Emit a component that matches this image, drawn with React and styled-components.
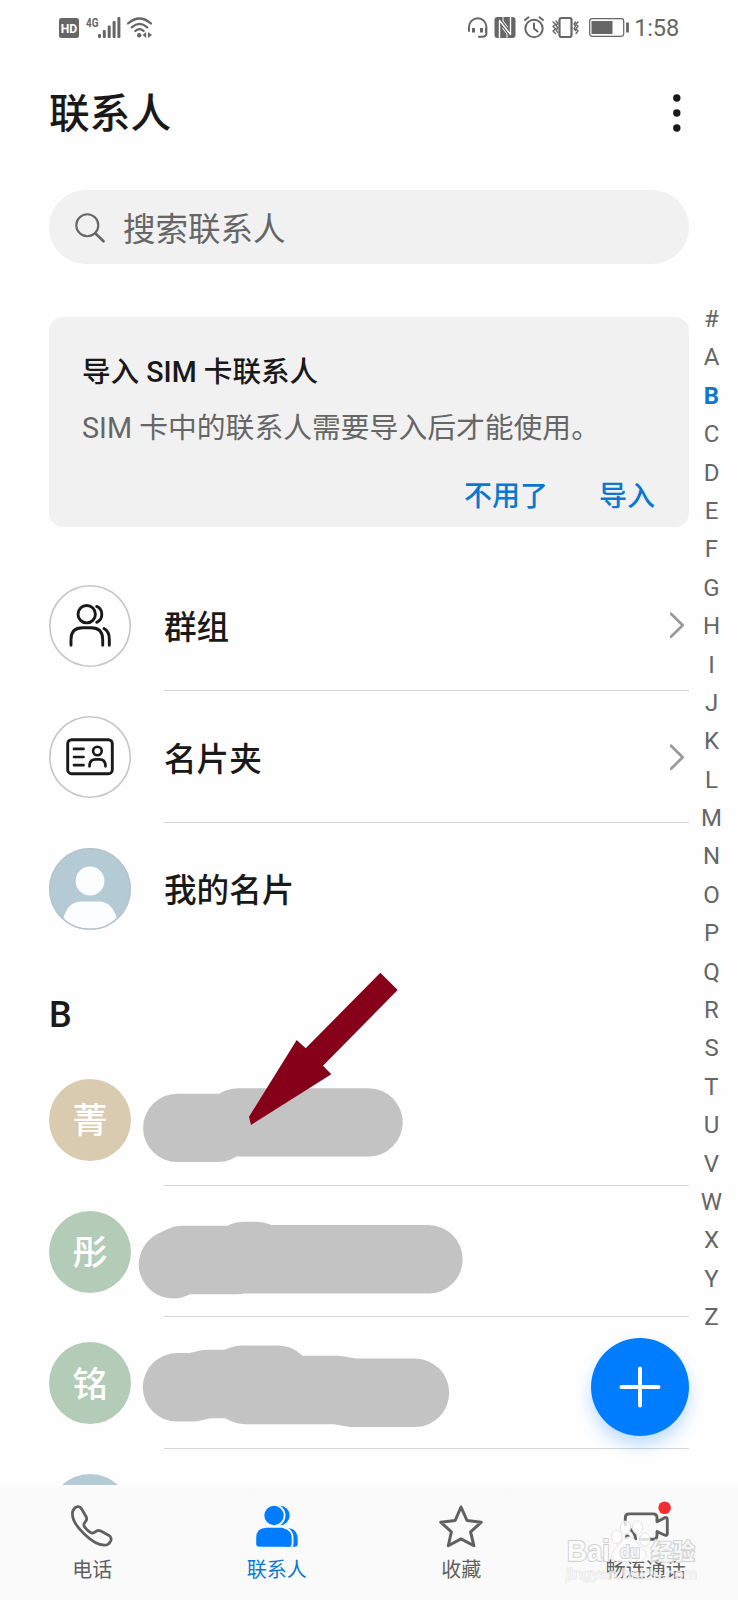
import React from "react";
import styled, { createGlobalStyle } from "styled-components";

const GlobalStyle = createGlobalStyle`
  * { box-sizing: border-box; }
  body { margin: 0; background: #fefefe; }
`;

const Screen = styled.div`
  position: relative;
  display: flex;
  flex-direction: column;
  width: 738px;
  height: 1600px;
  overflow: hidden;
  background: #fefefe;
  color: #191919;
  font-family: Roboto, "Noto Sans CJK SC", sans-serif;
`;

const StatusBar = styled.header`
  display: flex;
  align-items: center;
  justify-content: space-between;
  height: 56px;
  padding: 0 59px 0 58px;
  color: #666;
`;

const StatusGroup = styled.div`
  display: flex;
  align-items: center;
  gap: ${(p) => p.$gap}px;
`;

const Clock = styled.span`
  font-size: 23.6px;
  line-height: 28px;
  letter-spacing: -0.2px;
`;

const TitleBar = styled.div`
  display: flex;
  align-items: center;
  justify-content: space-between;
  height: 114px;
  padding: 0 57px 0 49px;
`;

const Title = styled.h1`
  margin: 0;
  padding-top: 2px;
  font-size: 40.7px;
  font-weight: 500;
  line-height: 60px;
`;

const SearchBox = styled.div`
  display: flex;
  align-items: center;
  gap: 17px;
  height: 74px;
  margin: 20px 49px 0;
  padding: 2px 0 0 26px;
  border-radius: 37px;
  background: #f1f1f1;
  color: #666;
  font-size: 32.5px;
  line-height: 44px;
  span { margin-top: 3px; }
`;

const Content = styled.div`
  display: flex;
  height: 1221px;
  overflow: hidden;
`;

const Main = styled.main`
  width: 640px;
  margin-left: 49px;
`;

const SimCard = styled.section`
  display: flex;
  flex-direction: column;
  height: 210px;
  margin: 53px 0 32.8px;
  padding: 33px 34px 0 33px;
  border-radius: 14px;
  background: #f1f1f1;
`;

const CardTitle = styled.div`
  font-size: 28.6px;
  font-weight: 500;
  line-height: 44px;
`;

const CardText = styled.div`
  margin-top: 12px;
  color: #666;
  font-size: 28.8px;
  line-height: 44px;
  white-space: nowrap;
`;

const CardActions = styled.div`
  display: flex;
  justify-content: flex-end;
  gap: 51px;
  margin-top: 25px;
`;

const TextButton = styled.button`
  padding: 0;
  border: 0;
  background: none;
  color: #0a78cf;
  font: 500 28px/44px Roboto, "Noto Sans CJK SC", sans-serif;
`;

const Row = styled.div`
  display: flex;
  align-items: center;
  flex-shrink: 0;
  height: ${(p) => p.$height}px;
`;

const RowBody = styled.div`
  display: flex;
  flex: 1;
  align-items: center;
  justify-content: space-between;
  align-self: stretch;
  margin-left: 33px;
  padding-right: 4px;
  border-bottom: 1px solid ${(p) => (p.$last ? "transparent" : "#d6d6d6")};
  font-size: 32.6px;
  font-weight: 500;
  span { margin-top: -1px; }
`;

const IconCircle = styled.div`
  width: 82px;
  height: 82px;
  svg { display: block; }
`;

const Avatar = styled.div`
  display: flex;
  align-items: center;
  justify-content: center;
  width: 82px;
  height: 82px;
  padding-bottom: 4px;
  border-radius: 50%;
  background: ${(p) => p.$color};
  color: #fff;
  font-size: 35px;
  font-weight: 500;
`;

const Redaction = styled.svg`
  flex-shrink: 0;
  margin: 1px 0 0 -33px;
  overflow: visible;
`;

const SectionLetter = styled.h2`
  display: flex;
  align-items: center;
  height: 99.6px;
  margin: 0;
  padding-top: 21px;
  font-size: 36px;
  font-weight: 500;
`;

const IndexBar = styled.nav`
  display: flex;
  flex-direction: column;
  width: 45px;
  padding-top: 36px;
`;

const IndexLetter = styled.span`
  height: 38.4px;
  color: ${(p) => (p.$active ? "#0a78cf" : "#666")};
  font-size: 24px;
  font-weight: ${(p) => (p.$active ? 700 : 400)};
  line-height: 38.4px;
  text-align: center;
`;

const TabBar = styled.nav`
  display: flex;
  height: 115px;
  padding-top: 17px;
  background: linear-gradient(#fdfdfd, #f9f9f9 4px, #fafafa);
`;

const Tab = styled.div`
  display: flex;
  flex: 1;
  flex-direction: column;
  align-items: center;
  color: ${(p) => (p.$active ? "#0a78cf" : "#5f5f5f")};
  font-size: 20px;
  line-height: 30px;
  svg { margin-bottom: 5px; overflow: visible; }
`;

const AddButton = styled.button`
  position: absolute;
  right: 49px;
  bottom: 164px;
  display: flex;
  align-items: center;
  justify-content: center;
  width: 98px;
  height: 98px;
  padding: 0;
  border: 0;
  border-radius: 50%;
  background: #007dfe;
  box-shadow: 0 9px 16px rgba(0, 125, 254, 0.25);
`;

const Pointer = styled.svg`
  position: absolute;
  left: 249px;
  top: 972px;
`;

const Watermark = styled.svg`
  position: absolute;
  right: 36px;
  bottom: 12px;
`;

const line = { fill: "none", strokeLinecap: "round", strokeLinejoin: "round" };

const LeftStatus = () => (
  <svg width="96" height="24" viewBox="58 16 96 24" fill="#666">
    <rect x="59" y="18" width="20" height="20" rx="2.5" />
    <text x="69" y="32.6" fill="#fff" fontSize="12.5" fontWeight="700" textAnchor="middle" textLength="16.5" lengthAdjust="spacingAndGlyphs">HD</text>
    <text x="86" y="26.5" fontSize="13.3" fontWeight="700" textLength="12.5" lengthAdjust="spacingAndGlyphs">4G</text>
    <rect x="98" y="34" width="3" height="4" rx="1" />
    <rect x="102.8" y="30" width="3" height="8" rx="1" />
    <rect x="107.7" y="25.5" width="3" height="12.5" rx="1" />
    <rect x="112.6" y="21" width="3" height="17" rx="1" />
    <rect x="117.4" y="17" width="3" height="21" rx="1" />
    <g {...line} stroke="#666" strokeWidth="2.2">
      <path d="M128 23.5Q139.5 13.5 151 23.5M131.7 27.3Q139.5 20.5 147.3 27.3M135.3 31Q139.5 27.3 143.7 31" />
    </g>
    <circle cx="139.2" cy="35.2" r="2.2" />
    <path d="M146.2 32v6l-3.6-3zM148 32v6l4-3z" />
  </svg>
);

const RightStatus = () => (
  <svg width="164" height="24" viewBox="466 16 164 24" fill="none" stroke="#666" strokeWidth="2" strokeLinecap="round" strokeLinejoin="round">
    <path d="M469 31v-4a8.7 8.7 0 0 1 17.4 0v6q0 3.8-4 3.8h-3.5M486 32.5v-4" />
    <path d="M473.5 28v4.5M481.5 28v4.5" strokeWidth="3" strokeLinecap="butt" />
    <rect x="494.5" y="17" width="21" height="21" rx="3" fill="#666" stroke="none" />
    <path d="M499.5 37.5V20.5L510.5 34.5V17.5" stroke="#fff" strokeWidth="1.4" />
    <path d="M503 17.5v3.5l4.5 6M502.5 28l4.5 6v3.5" stroke="#fff" strokeWidth="1" />
    <circle cx="534" cy="28.5" r="8.7" />
    <path d="M534 23.5v5l3.5 3M525 20l3.5-2.7M543 20l-3.5-2.7" />
    <rect x="559.5" y="18" width="12" height="19" rx="2" strokeWidth="2.2" />
    <path d="M553 22l2.5 2-2.5 2.5 2.5 2.3-2.5 2.2 2.5 2.5M556 21l2 2.5-2 2 2 2.5-2 2 2 2.5M578 22l-2 2 2 2.5-2 2.3 2 2.2-2 2.5M575.5 22l-1.5 2 1.5 2-1.5 2.5 1.5 2" strokeWidth="1.4" />
    <rect x="589.7" y="18.7" width="34" height="17.6" rx="2.5" strokeWidth="1.2" />
    <rect x="591.5" y="21" width="21" height="13" fill="#666" stroke="none" />
    <path d="M627.5 22.5v10" strokeWidth="2.8" strokeLinecap="butt" />
  </svg>
);

const MoreIcon = () => (
  <svg width="8" height="40" viewBox="0 0 8 40" fill="#191919">
    <circle cx="3.8" cy="5" r="3.7" /><circle cx="3.8" cy="20" r="3.7" /><circle cx="3.8" cy="35" r="3.7" />
  </svg>
);

const SearchIcon = () => (
  <svg width="31" height="32" viewBox="0 0 31 32" {...line} stroke="#666" strokeWidth="2.1">
    <circle cx="12.3" cy="13.2" r="11" /><path d="M20.3 21.2l8.2 8" strokeWidth="2.7" />
  </svg>
);

const Chevron = () => (
  <svg width="15" height="26" viewBox="0 0 15 26" {...line} stroke="#999" strokeWidth="2.7">
    <path d="M1 1.8L12.7 13.3L1 24.8" />
  </svg>
);

const GroupIcon = () => (
  <svg width="82" height="82" {...line} stroke="#191919" strokeWidth="2.9">
    <circle cx="41" cy="41" r="40.2" stroke="#c6c6c6" strokeWidth="1.6" />
    <circle cx="37.7" cy="29.2" r="8.7" />
    <path d="M47.7 21.4C54.5 24 54.5 34.5 47.7 37.3M22 60.2V54.5Q22 42.8 33.7 42.8H42Q53.7 42.8 53.7 54.5V60.2M55 43.6Q60.3 46.5 60.3 54V60.2" />
  </svg>
);

const CardIcon = () => (
  <svg width="82" height="82" {...line} stroke="#191919" strokeWidth="2.9">
    <circle cx="41" cy="41" r="40.2" stroke="#c6c6c6" strokeWidth="1.6" />
    <rect x="18.7" y="23.7" width="44.6" height="34" rx="4" />
    <path d="M25 32.9h9.5M25 41h9.5M25 49.2h9.5M40.5 50.3Q40.5 43.3 46.5 43.3h4Q56.5 43.3 56.5 50.3" strokeWidth="2.7" />
    <circle cx="48.4" cy="35" r="4.3" strokeWidth="2.6" />
  </svg>
);

const ProfileIcon = () => (
  <svg width="82" height="82">
    <circle cx="41" cy="41" r="41" fill="#b4cad5" />
    <circle cx="41" cy="33" r="14.4" fill="#fbfdfe" />
    <path d="M14.3 70.5C17 60 23 53.5 32 53.5H50C59 53.5 65 60 67.7 70.5A39.6 39.6 0 0 1 14.3 70.5Z" fill="#fbfdfe" />
    <circle cx="41" cy="41" r="40.3" fill="none" stroke="#b7c4ca" strokeWidth="1.4" />
  </svg>
);

const PhoneIcon = () => (
  <svg width="48" height="48" {...line} stroke="#606060" strokeWidth="2.8">
    <path d="M5.2 8.2C7.7 3.8 11.6 3.5 13.7 7L18 14.5Q19.5 17 17.7 19.3L16.3 21.3Q15.3 23 16.5 24.7Q18.7 28.2 22.5 30.5Q24.5 31.6 26.5 30.3L28.5 29Q30.5 28 32.8 29L41 33.4Q44 35.3 42.8 38.7Q40.8 43.2 36.5 43.2C24.5 43.2 4.5 23 4.5 12.5Q4.2 10 5.2 8.2Z" />
  </svg>
);

const PeopleIcon = () => (
  <svg width="48" height="48" fill="#007dfe">
    <circle cx="26.8" cy="13.5" r="9.8" />
    <path d="M33 26Q44.7 26 44.7 37.5V42Q44.7 44.8 42 44.8H33Z" />
    <circle cx="21" cy="13.5" r="10.6" stroke="#fafafa" strokeWidth="1.8" />
    <path d="M3.2 36Q3.2 25.7 13.5 25.7H28.5Q38.8 25.7 38.8 36V41.5Q38.8 44.8 35.5 44.8H6.5Q3.2 44.8 3.2 41.5Z" />
    <path d="M31 25.5Q39.6 27.5 39.6 36V41.5Q39.6 44 38 45" fill="none" stroke="#fafafa" strokeWidth="1.8" />
  </svg>
);

const StarIcon = () => (
  <svg width="48" height="48" {...line} stroke="#606060" strokeWidth="3">
    <path d="M24 5L30 18.5L44.3 20.2L33.6 29.8L36.9 43.8L24 36.9L11.3 43.8L14.4 29.8L3.7 20.2L18.2 18.5Z" />
  </svg>
);

const VideoIcon = () => (
  <svg width="48" height="48" {...line} stroke="#606060" strokeWidth="2.9">
    <path d="M3.3 23V15.9Q3.3 11.9 7.3 11.9H31Q35 11.9 35 15.9V19.8L43 15.6Q45.3 15 45.3 17.5V31.5Q45.3 34 43 33.2L35 29.5V33.2Q35 37.2 31 37.2H19M8.5 27.5Q13 30.5 13.7 37" />
    <circle cx="5.3" cy="34.9" r="1" />
    <circle cx="42.6" cy="5.7" r="6.3" fill="#f32d35" stroke="none" />
  </svg>
);

const contacts = [
  { name: "菁", color: "#d8cbb0", strokes: "M46.3 48.9H87M107 43.4H237.5" },
  { name: "彤", color: "#b3ccb8", strokes: "M42 53.3L51 49H107M112 45H126M117 48.3H297.5" },
  { name: "铭", color: "#b3ccb8", strokes: "M46 45.3H62L76 42H99L111 37.7H147M114 48H206L222 50.8H284" },
];

const links = [
  { label: "群组", Icon: GroupIcon, arrow: true },
  { label: "名片夹", Icon: CardIcon, arrow: true },
  { label: "我的名片", Icon: ProfileIcon, last: true },
];

const tabs = [
  { label: "电话", Icon: PhoneIcon },
  { label: "联系人", Icon: PeopleIcon, active: true },
  { label: "收藏", Icon: StarIcon },
  { label: "畅连通话", Icon: VideoIcon },
];

export default function App() {
  return (
    <Screen>
      <GlobalStyle />
      <StatusBar>
        <LeftStatus />
        <StatusGroup $gap={4}>
          <RightStatus />
          <Clock>1:58</Clock>
        </StatusGroup>
      </StatusBar>
      <TitleBar>
        <Title>联系人</Title>
        <MoreIcon />
      </TitleBar>
      <SearchBox>
        <SearchIcon />
        <span>搜索联系人</span>
      </SearchBox>
      <Content>
        <Main>
          <SimCard>
            <CardTitle>导入 SIM 卡联系人</CardTitle>
            <CardText>SIM 卡中的联系人需要导入后才能使用。</CardText>
            <CardActions>
              <TextButton>不用了</TextButton>
              <TextButton>导入</TextButton>
            </CardActions>
          </SimCard>
          {links.map(({ label, Icon, arrow, last }) => (
            <Row key={label} $height={131.5}>
              <IconCircle><Icon /></IconCircle>
              <RowBody $last={last}>
                <span>{label}</span>
                {arrow && <Chevron />}
              </RowBody>
            </Row>
          ))}
          <SectionLetter>B</SectionLetter>
          {contacts.map(({ name, color, strokes }) => (
            <Row key={name} $height={131.8}>
              <Avatar $color={color}>{name}</Avatar>
              <RowBody>
                <Redaction width="340" height="82">
                  <path d={strokes} {...line} stroke="#c3c3c3" strokeWidth="68.4" />
                </Redaction>
              </RowBody>
            </Row>
          ))}
          <Row $height={131.8}>
            <Avatar $color="#b4cad5" />
          </Row>
        </Main>
        <IndexBar>
          {"#ABCDEFGHIJKLMNOPQRSTUVWXYZ".split("").map((letter) => (
            <IndexLetter key={letter} $active={letter === "B"}>{letter}</IndexLetter>
          ))}
        </IndexBar>
      </Content>
      <TabBar>
        {tabs.map(({ label, Icon, active }) => (
          <Tab key={label} $active={active}>
            <Icon />
            <span>{label}</span>
          </Tab>
        ))}
      </TabBar>
      <AddButton aria-label="add">
        <svg width="42" height="42" stroke="#fff" strokeWidth="4" strokeLinecap="round">
          <path d="M21 2.5v37M2.5 21h37" />
        </svg>
      </AddButton>
      <Pointer width="150" height="154" viewBox="249 972 150 154">
        <path d="M380.3 972.7L397.7 990L323 1065.7L331.3 1074.3L251 1125L249 1116.7L296.7 1040L305.7 1048.3Z" fill="#86001a" />
      </Pointer>
      <Watermark width="138" height="70" viewBox="564 1518 138 70">
        <g fill="#fff" fillOpacity=".8" stroke="#d2d2d2" strokeWidth="1" paintOrder="stroke">
          <ellipse cx="616.7" cy="1537" rx="5" ry="6.5" />
          <ellipse cx="625.5" cy="1527.5" rx="5" ry="6.5" />
          <ellipse cx="637.5" cy="1527.5" rx="5" ry="6.5" />
          <ellipse cx="645" cy="1539.5" rx="5" ry="6.5" />
          <path d="M629 1537C635 1537 637 1544 643 1549C649 1555 645 1562 637 1561.5H620C611 1562 610 1554 615 1549C621 1544 623 1537 629 1537Z" />
          <g strokeWidth="2" fontFamily="'Liberation Sans', 'Noto Sans CJK SC', sans-serif">
            <text x="567" y="1561" fontSize="30" fontWeight="700" textLength="43" lengthAdjust="spacingAndGlyphs">Bai</text>
            <text x="620" y="1558" fontSize="18" fontWeight="700" textLength="20" lengthAdjust="spacingAndGlyphs">du</text>
            <text x="651" y="1559" fontSize="22" fontWeight="700">经验</text>
            <text x="566" y="1578.5" fontSize="15" fillOpacity=".7" strokeWidth="1" strokeOpacity=".6" textLength="131" lengthAdjust="spacingAndGlyphs">jingyan.baidu.com</text>
          </g>
        </g>
      </Watermark>
    </Screen>
  );
}
